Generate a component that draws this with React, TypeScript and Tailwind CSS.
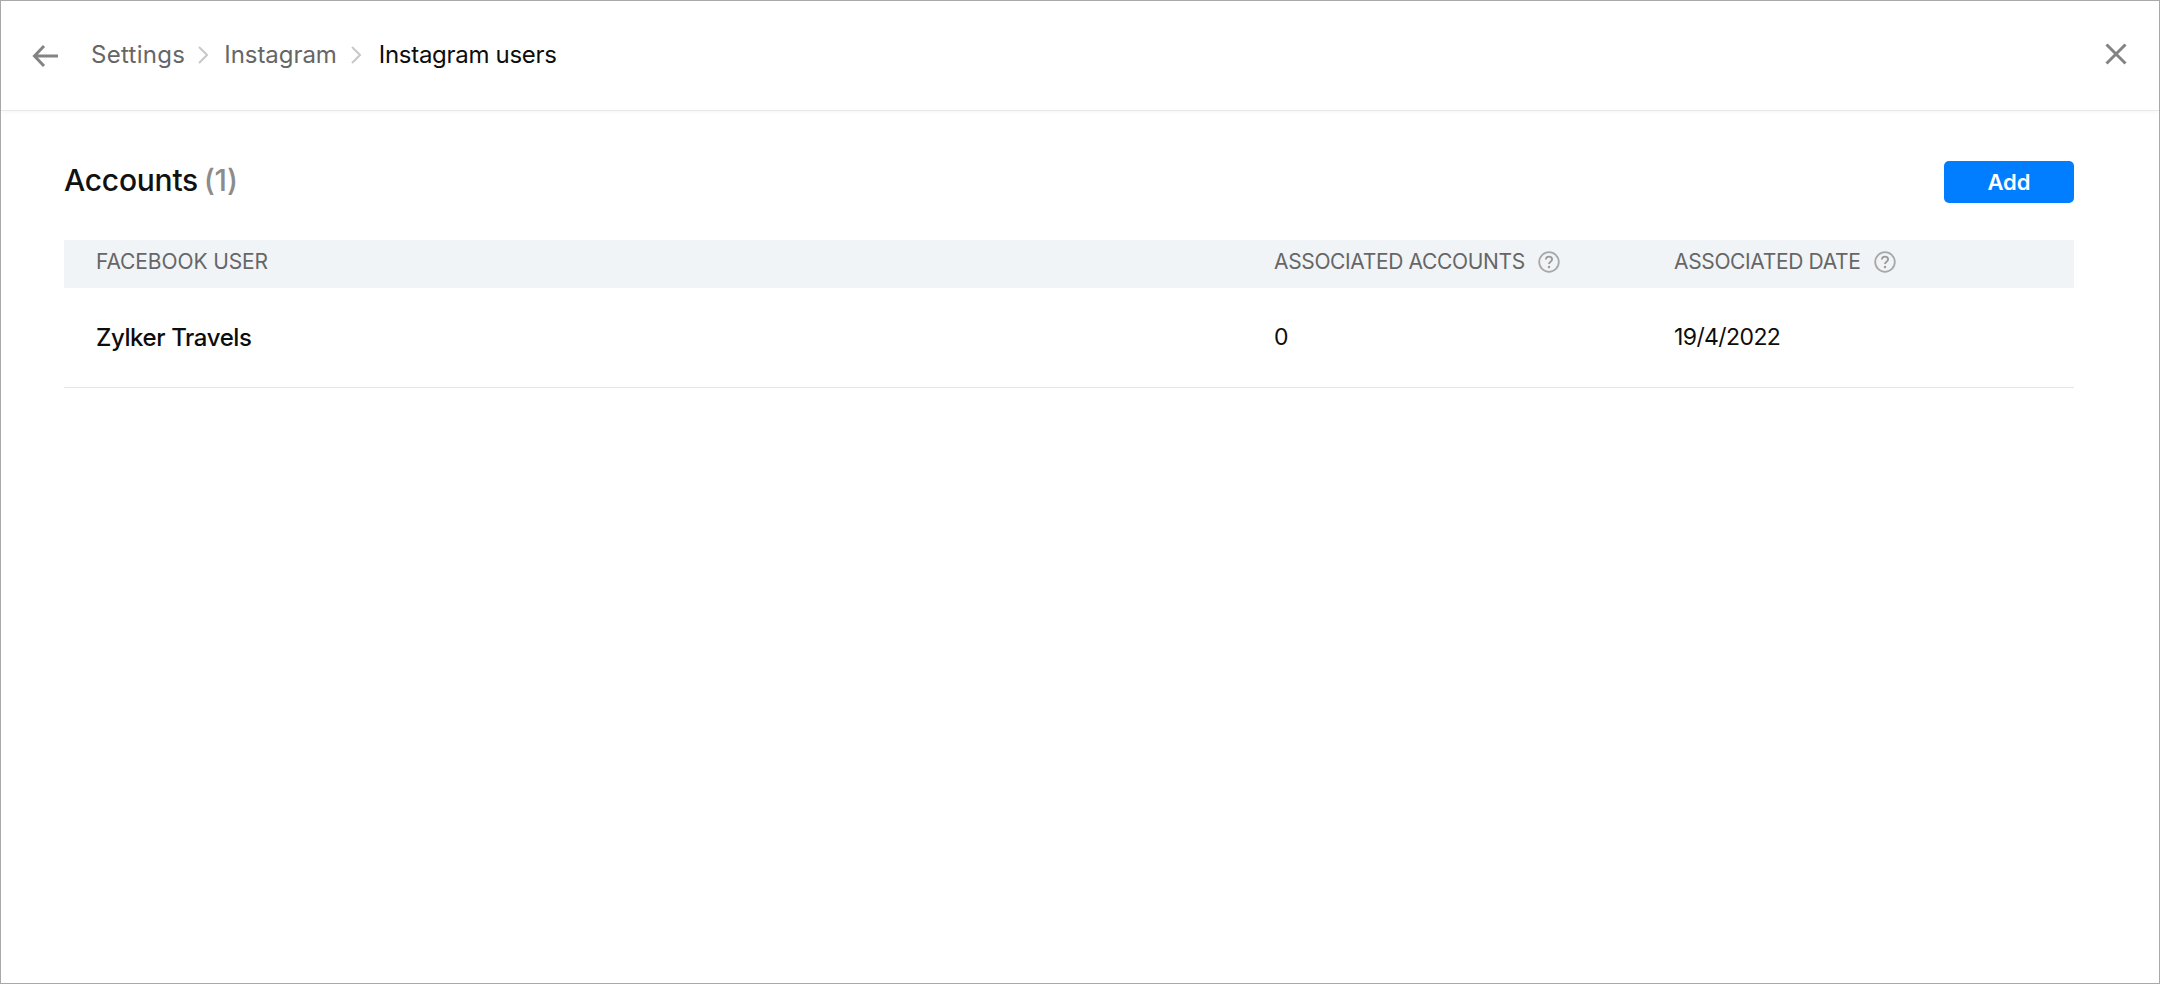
function HelpIcon() {
  return (
    <svg width="22" height="22" viewBox="0 0 22 22" fill="none" className="ml-[13px] mb-[1px] shrink-0">
      <circle cx="11" cy="11" r="9.8" stroke="#a8a8a8" strokeWidth="1.8" />
      <path d="M7.9 8.6c0-1.8 1.3-2.9 3.1-2.9s3.1 1.1 3.1 2.7c0 2.4-3.1 2.4-3.1 4.6" stroke="#999999" strokeWidth="1.8" />
      <circle cx="11" cy="16" r="1.2" fill="#999999" />
    </svg>
  );
}

function Chevron() {
  return (
    <svg width="10" height="18" viewBox="0 0 10 18" fill="none" className="shrink-0">
      <path d="M1 1l8 8-8 8" stroke="#c8c8c8" strokeWidth="2" />
    </svg>
  );
}

export default function App() {
  return (
    <div className="h-[984px] bg-white border border-[#a9a9a9] flex flex-col font-['Inter','Liberation_Sans',sans-serif]">
      <div className="h-[110px] flex items-center border-b border-[#e8e8e8] shadow-[0_2px_4px_rgba(0,0,0,0.03)] pl-[31px] pr-[32px] shrink-0">
        <svg width="26" height="24" viewBox="0 0 26 24" fill="none" className="shrink-0">
          <path d="M26 12H3M12 2 2.5 12l9.500 10" stroke="#838383" strokeWidth="3" />
        </svg>
        <div className="flex items-center ml-[33px] mb-[2px] text-[24px] tracking-[-0.2px]">
          <span className="text-[#666666] tracking-[0.3px]">Settings</span>
          <span className="ml-[13px] mr-[16px] flex"><Chevron /></span>
          <span className="text-[#666666] tracking-[-0.05px]">Instagram</span>
          <span className="ml-[14px] mr-[18px] flex"><Chevron /></span>
          <span className="text-[#0d0d0d] tracking-[-0.3px]">Instagram users</span>
        </div>
        <svg width="22" height="22" viewBox="0 0 22 22" fill="none" className="ml-auto mb-[3px] shrink-0">
          <path d="m1.500 1.500 19 19M20.500 1.500l-19 19" stroke="#838383" strokeWidth="3" />
        </svg>
      </div>

      <div className="pl-[63px] pr-[85px]">
        <div className="flex items-center justify-between pt-[50px]">
          <h1 className="text-[30px] font-medium leading-[38px] tracking-[-0.25px] text-[#111111] mb-[4px]">
            Accounts <span className="text-[#8c8c8c] -ml-[2px]">(1)</span>
          </h1>
          <button className="w-[130px] h-[42px] rounded-[5px] bg-[#007eff] text-white text-[22px] font-semibold">Add</button>
        </div>

        <div className="mt-[37px] grid grid-cols-[1177px_400px_1fr] h-[48px] items-center bg-[#f1f4f7] text-[21px] text-[#666666] tracking-[-0.35px]">
          <div className="pl-[32px] pb-[4px] tracking-[-0.1px]">FACEBOOK USER</div>
          <div className="pl-[33px] pb-[4px] flex items-center">ASSOCIATED ACCOUNTS<HelpIcon /></div>
          <div className="pl-[33px] pb-[4px] flex items-center">ASSOCIATED DATE<HelpIcon /></div>
        </div>

        <div className="grid grid-cols-[1177px_400px_1fr] h-[100px] items-center border-b border-[#e6e6e6] text-[#0d0d0d]">
          <div className="pl-[32px] font-medium text-[24px] tracking-[-0.4px]">Zylker Travels</div>
          <div className="pl-[33px] text-[23px] tracking-[-0.6px]">0</div>
          <div className="pl-[33px] text-[23px] tracking-[-0.6px]">19/4/2022</div>
        </div>
      </div>
    </div>
  );
}
